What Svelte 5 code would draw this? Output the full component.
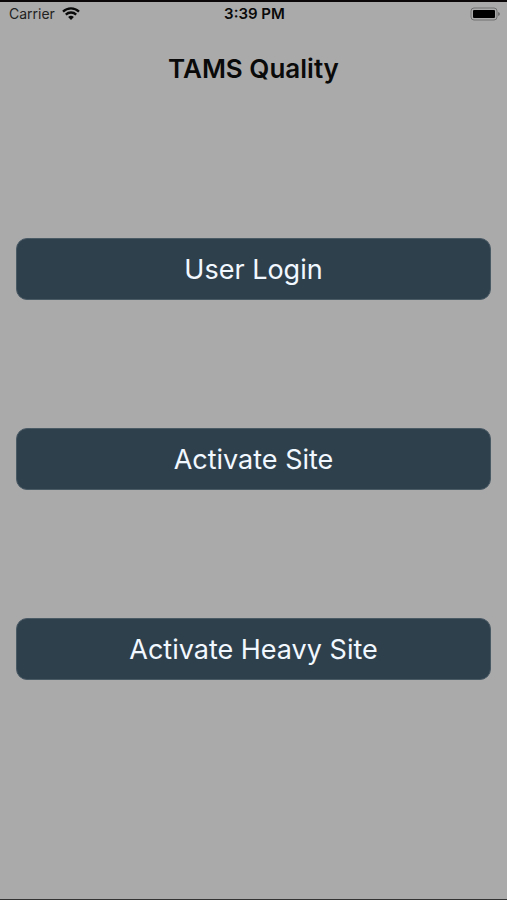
<script lang="ts">
	export let title = "TAMS Quality";
	export let time = "3:39 PM";

	const actions = [
		{ id: "login", label: "User Login" },
		{ id: "site", label: "Activate Site" },
		{ id: "heavy", label: "Activate Heavy Site" }
	];

	let selected = "";
</script>

<div class="screen">
	<div class="status">
		<div class="carrier">
			<span>Carrier</span>
			<svg class="wifi" viewBox="0 0 18 13" aria-hidden="true">
				<path d="M1 4.6 A11.6 11.6 0 0 1 17 4.6" />
				<path d="M3.8 7.6 A7.5 7.5 0 0 1 14.2 7.6" />
				<path class="dot" d="M9 13 L6.1 10.1 A4.2 4.2 0 0 1 11.9 10.1 Z" />
			</svg>
		</div>
		<span class="time">{time}</span>
		<svg class="battery" viewBox="0 0 30 14" aria-hidden="true">
			<rect class="shell" x="1" y="1" width="26" height="12" rx="3" />
			<rect x="3" y="3" width="22" height="8" rx="1" />
			<path class="cap" d="M28 5 Q30 5.5 30 7 Q30 8.5 28 9 Z" />
		</svg>
	</div>

	<h1>{title}</h1>

	<main>
		{#each actions as action (action.id)}
			<button type="button" on:click={() => (selected = action.id)}>{action.label}</button>
		{/each}
	</main>
</div>

<style>
	:global(body) {
		background: #aaaaaa;
	}

	.screen {
		box-sizing: border-box;
		min-height: 100vh;
		background: #aaaaaa;
		border-top: 2px solid #0b0708;
		border-bottom: 1px solid #333333;
		color: #0a0a0a;
		font-family: Inter, "Liberation Sans", sans-serif;
	}

	.status {
		display: grid;
		grid-template-columns: 1fr auto 1fr;
		align-items: center;
		height: 23px;
		padding: 0 7px 0 9px;
		font-size: 14px;
		line-height: 17px;
	}

	.carrier {
		display: flex;
		align-items: center;
		gap: 7px;
		color: #222222;
	}

	.wifi {
		width: 18px;
		height: 13px;
		fill: none;
		stroke: #0a0a0a;
		stroke-width: 2.3;
	}

	.wifi .dot {
		fill: #0a0a0a;
		stroke: none;
	}

	.time {
		font-size: 15px;
		font-weight: 600;
	}

	.battery {
		justify-self: end;
		width: 30px;
		height: 14px;
		fill: #000000;
	}

	.battery .shell {
		fill: none;
		stroke: #707070;
	}

	.battery .cap {
		fill: #707070;
	}

	h1 {
		margin: 26px 0 0;
		font-size: 26px;
		line-height: 36px;
		font-weight: 600;
		text-align: center;
	}

	main {
		display: flex;
		flex-direction: column;
		gap: 128px;
		padding: 151px 16px 64px;
	}

	button {
		height: 62px;
		padding: 0 16px;
		background: #2f404d;
		border: 1px solid #4a5a65;
		border-radius: 11px;
		color: #f2f8ff;
		font-family: inherit;
		font-size: 27px;
		cursor: pointer;
	}
</style>
